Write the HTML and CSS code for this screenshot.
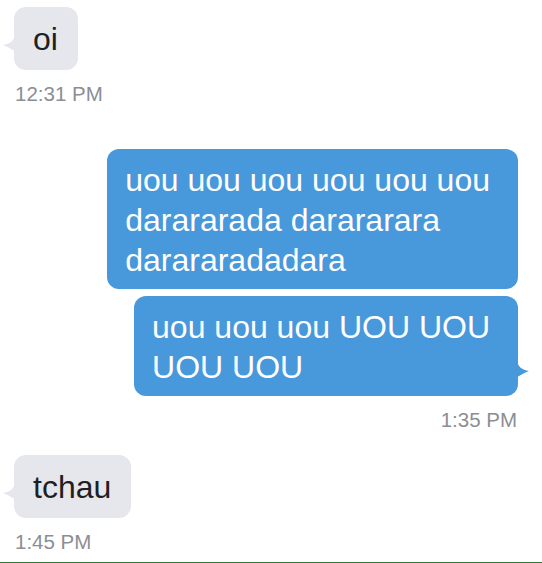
FILE: index.html
```html
<html>
  <head>
    <meta charset="utf-8" />
    <title>Mensagens</title>
    <link rel="stylesheet" href="styles.css">
  </head>
  <body>
    <main class="thread">
      <div class="bubble received">
        oi
        <svg class="tail" width="14" height="20" viewBox="0 0 14 20"><path d="M14 0 C12 8 8 11 1 12 C6 14 10 16 14 19 Z" /></svg>
      </div>
      <div class="time">12:31 PM</div>

      <div class="bubble sent first">
        uou uou uou uou uou uou<br>darararada darararara<br>darararadadara
      </div>
      <div class="bubble sent">
        uou uou uou UOU UOU<br>UOU UOU
        <svg class="tail" width="14" height="20" viewBox="0 0 14 20"><path d="M0 0 C2 8 6 11 13 12 C8 14 4 16 0 19 Z" /></svg>
      </div>
      <div class="time right">1:35 PM</div>

      <div class="bubble received later">
        tchau
        <svg class="tail" width="14" height="20" viewBox="0 0 14 20"><path d="M14 0 C12 8 8 11 1 12 C6 14 10 16 14 19 Z" /></svg>
      </div>
      <div class="time">1:45 PM</div>
    </main>
  </body>
</html>
```
FILE: styles.css
```css
html, body {
  margin: 0;
  height: 100%;
}

body {
  background-color: #ffffff;
  font-family: "Liberation Sans", Arial, sans-serif;
}

.thread {
  box-sizing: border-box;
  height: 100%;
  display: flex;
  flex-direction: column;
  align-items: flex-start;
  padding: 7px 24px 0 14px;
  border-bottom: 1px solid #2e7d32;
}

.bubble {
  position: relative;
  font-size: 32px;
  line-height: 40px;
  white-space: nowrap;
  border-radius: 12px;
  padding: 12px 20px 11px 19px;
}

.bubble.received {
  background-color: #e6e7ec;
  color: #1f1f22;
}

.bubble.sent {
  align-self: flex-end;
  background-color: #4898dc;
  color: #ffffff;
  padding: 11px 28px 9px 18px;
  margin-top: 7px;
}

.bubble.sent.first {
  margin-top: 43px;
}

.bubble.later {
  margin-top: 23px;
}

.tail {
  position: absolute;
  bottom: 17px;
}

.received .tail {
  left: -12px;
  fill: #e6e7ec;
}

.sent .tail {
  right: -12px;
  fill: #4898dc;
}

.time {
  margin-top: 12px;
  margin-left: 1px;
  font-size: 20.5px;
  line-height: 24px;
  color: #8b8e94;
}

.time.right {
  align-self: flex-end;
  margin-left: 0;
  margin-right: 1px;
}
```
